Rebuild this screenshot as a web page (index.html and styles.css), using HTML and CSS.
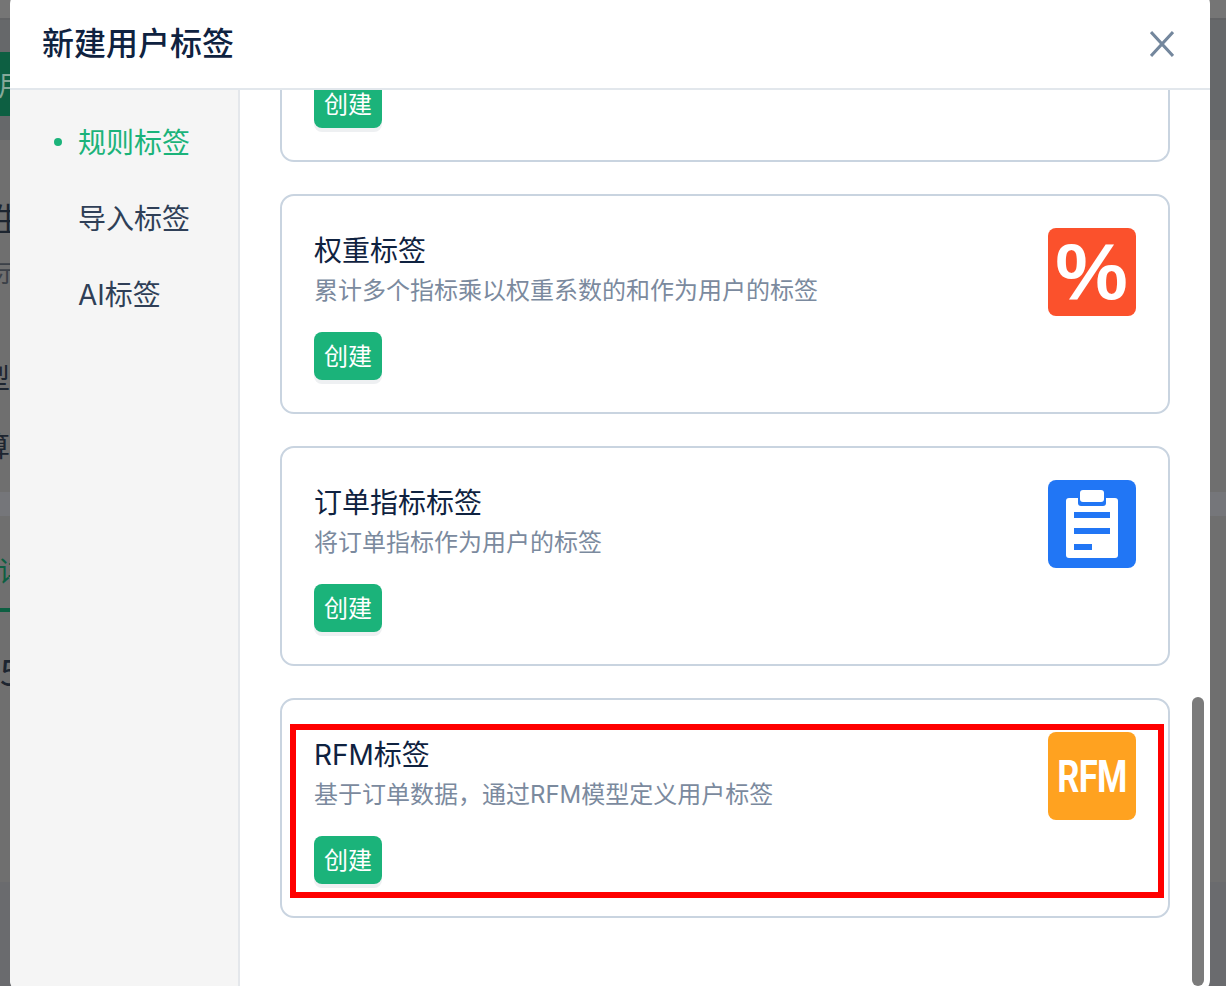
FILE: index.html
```html
<!DOCTYPE html>
<html lang="zh-CN">
<head>
    <meta charset="UTF-8">
    <title>新建用户标签</title>
    <link rel="stylesheet" href="styles.css">
</head>
<body>
<!-- page behind the dialog, only the edges show -->
<div class="backdrop">
    <div class="bd-top"></div>
    <div class="bd-head">
        <div class="bd-green">用</div>
    </div>
    <div class="bd-line bd-big">生</div>
    <div class="bd-line bd-small">示</div>
    <div class="bd-line bd-type">型</div>
    <div class="bd-line bd-calc">算</div>
    <div class="bd-band"></div>
    <div class="bd-tab">详</div>
    <div class="bd-num">5</div>
    <div class="bd-foot"></div>
</div>
<div class="modal">
    <div class="modal-head">
        <h1>新建用户标签</h1>
        <svg class="close" width="24" height="26" viewBox="0 0 24 26"><path d="M1 1 L23 25 M23 1 L1 25" fill="none" stroke="#74879d" stroke-width="3"/></svg>
    </div>
    <div class="modal-body">
        <ul class="side">
            <li class="active">规则标签</li>
            <li>导入标签</li>
            <li>AI标签</li>
        </ul>
        <div class="main">
            <div class="card card-cut">
                <button type="button" class="btn">创建</button>
            </div>
            <div class="card">
                <div class="card-text">
                    <h2>权重标签</h2>
                    <p>累计多个指标乘以权重系数的和作为用户的标签</p>
                    <button type="button" class="btn">创建</button>
                </div>
                <div class="icon icon-red"><span>%</span></div>
            </div>
            <div class="card">
                <div class="card-text">
                    <h2>订单指标标签</h2>
                    <p>将订单指标作为用户的标签</p>
                    <button type="button" class="btn">创建</button>
                </div>
                <div class="icon icon-blue">
                    <svg width="88" height="88" viewBox="0 0 88 88">
                        <rect x="18" y="18" width="52" height="60" rx="3" fill="#fff"/>
                        <rect x="30" y="12" width="28" height="14" rx="3" fill="#2176f5"/>
                        <rect x="32" y="10" width="24" height="12" rx="3" fill="#fff"/>
                        <rect x="26" y="32" width="36" height="6" fill="#2176f5"/>
                        <rect x="26" y="48" width="36" height="6" fill="#2176f5"/>
                        <rect x="26" y="64" width="18" height="6" fill="#2176f5"/>
                    </svg>
                </div>
            </div>
            <div class="card card-marked">
                <div class="card-text">
                    <h2>RFM标签</h2>
                    <p>基于订单数据，通过RFM模型定义用户标签</p>
                    <button type="button" class="btn">创建</button>
                </div>
                <div class="icon icon-orange"><span>RFM</span></div>
                <div class="mark"></div>
            </div>
        </div>
        <div class="scrollbar"></div>
    </div>
</div>
</body>
</html>
```

FILE: styles.css
```css
html, body { margin: 0; padding: 0; height: 100%; overflow: hidden; }
body { background: #6f6f6f; font-family: Inter, "Noto Sans CJK SC", sans-serif; color: #0f2240; }

/* backdrop */
.backdrop { height: 986px; overflow: hidden; color: #1d2530; background: #6f6f6f; font-family: "Noto Sans CJK SC", sans-serif; }
.bd-top { height: 18px; background: #757575; border-bottom: 2px solid #626365; }
.bd-head { height: 120px; padding-top: 32px; box-sizing: border-box; background: #66686a; }
.bd-green { width: 30px; height: 64px; line-height: 64px; background: #0d5f42; color: #86a99a; font-size: 28px; text-indent: -2px; overflow: hidden; }
.bd-line { overflow: hidden; }
.bd-big { height: 54px; line-height: 54px; font-size: 32px; margin: 50px 0 0 -8px; }
.bd-small { height: 30px; line-height: 30px; font-size: 24px; color: #3c4148; margin: 13px 0 0 -5px; }
.bd-type { height: 40px; line-height: 40px; font-size: 28px; margin: 70px 0 0 -18px; }
.bd-calc { height: 40px; line-height: 40px; font-size: 28px; margin: 28px 0 0 -18px; }
.bd-band { height: 24px; background: #75767a; margin-top: 27px; }
.bd-tab { width: 30px; height: 96px; box-sizing: border-box; padding-top: 34px; line-height: 40px; font-size: 28px; color: #0d5f42; text-indent: -2px; overflow: hidden; border-bottom: 4px solid #0d5f42; }
.bd-num { height: 60px; line-height: 60px; font-size: 36px; margin-top: 28px; }
.bd-foot { height: 104px; background: #6a6b6e; margin-top: 182px; }

/* dialog */
.modal { position: absolute; left: 10px; top: -8px; width: 1200px; height: 1000px; background: #fff; border-radius: 12px; overflow: hidden; display: flex; flex-direction: column; }
.modal-head { flex: none; height: 98px; box-sizing: border-box; border-bottom: 2px solid #e2e7ec; display: flex; align-items: center; justify-content: space-between; padding: 8px 36px 0 32px; }
.modal-head h1 { margin: 0; font-size: 32px; font-weight: 500; line-height: 46px; color: #0f2240; }
.close { display: block; }
.modal-body { flex: 1; display: flex; position: relative; min-height: 0; }

.side { flex: none; width: 228px; margin: 0; padding: 15px 0 0; list-style: none; background: #f5f5f5; border-right: 2px solid #e4e7eb; }
.side li { height: 76px; line-height: 76px; padding-left: 68px; font-size: 28px; color: #2f3f57; position: relative; }
.side li.active { color: #1bb37a; }
.side li.active::before { content: ""; position: absolute; left: 44px; top: 33px; width: 8px; height: 8px; border-radius: 50%; background: #1bb37a; }

.main { flex: 1; padding: 0 40px; display: flex; flex-direction: column; gap: 32px; overflow: hidden; }
.card { flex: none; height: 220px; box-sizing: border-box; border: 2px solid #c9d4e0; border-radius: 14px; padding: 32px; display: flex; justify-content: space-between; position: relative; }
.card-cut { height: 72px; padding: 0 32px; border-top: 0; border-top-left-radius: 0; border-top-right-radius: 0; }
.card-cut .btn { margin-top: -10px; }
.card h2 { margin: 1px 0 0; font-size: 28px; font-weight: 400; line-height: 44px; color: #0f2240; }
.card p { margin: 0 0 23px; font-size: 24px; line-height: 36px; color: #7b8a9e; }
.btn { display: block; width: 68px; height: 48px; padding: 0 0 4px; border: none; border-radius: 8px; background: #1bb37a; color: #fff; font-family: "Noto Sans CJK SC", sans-serif; font-size: 24px; box-shadow: 0 4px 0 #eef0f2; }

.icon { flex: none; width: 88px; height: 88px; border-radius: 8px; color: #fff; display: flex; align-items: center; justify-content: center; overflow: hidden; }
.icon-red { background: #fb512c; font-family: "Liberation Sans", sans-serif; font-weight: 700; font-size: 80px; line-height: 84px; }
.icon-red span { display: block; transform: scaleX(1.02); }
.icon-blue { background: #2176f5; }
.icon-orange { background: #ffa220; font-family: Roboto, sans-serif; font-weight: 700; font-size: 45px; }
.icon-orange span { display: block; letter-spacing: -1px; transform: scaleX(.77); }

/* red annotation drawn over the last card */
.mark { position: absolute; left: 8px; top: 24px; width: 862px; height: 162px; border: 6px solid #ff0000; }

.scrollbar { position: absolute; right: 6px; top: 607px; width: 12px; height: 289px; border-radius: 6px; background: #7b7b7b; }
```
